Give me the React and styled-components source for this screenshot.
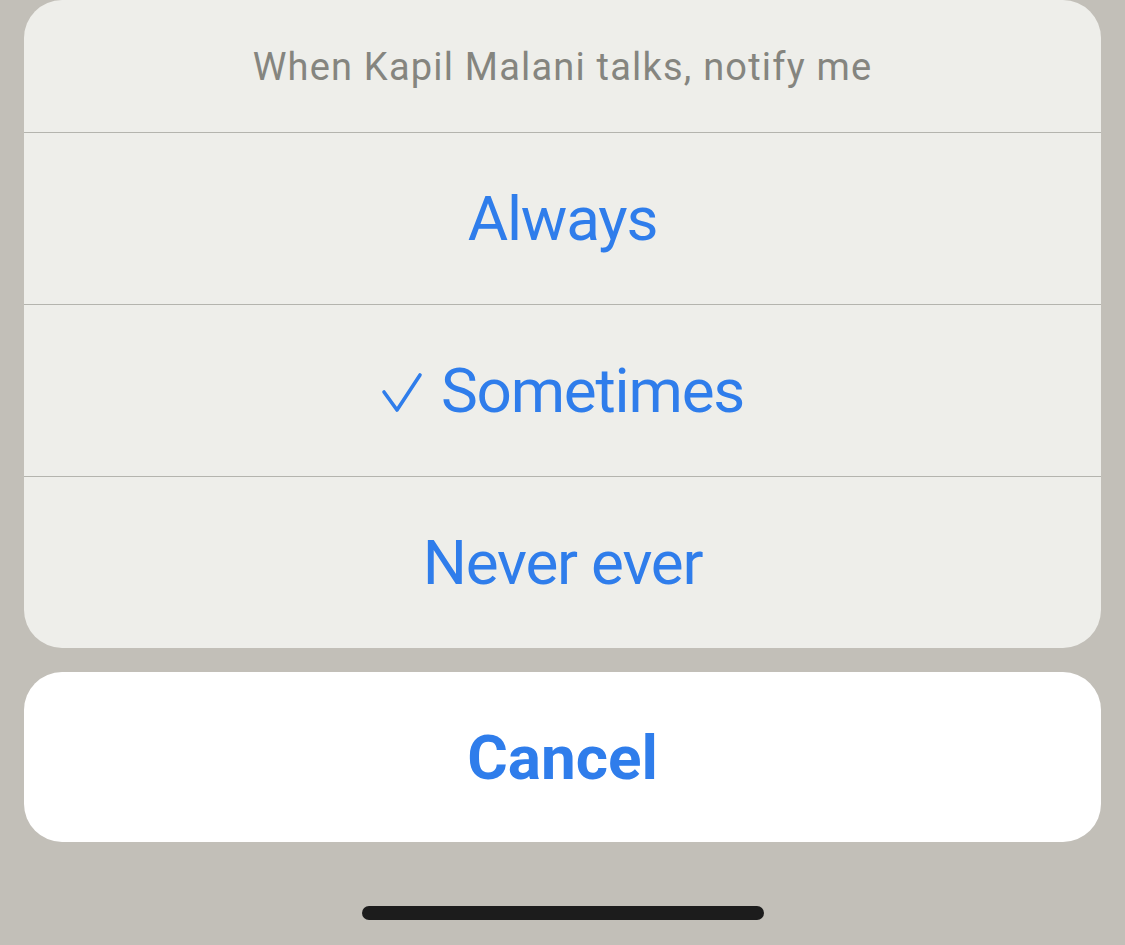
import React, { useState } from "react";
import styled, { createGlobalStyle } from "styled-components";

const Global = createGlobalStyle`
  html, body {
    margin: 0;
    padding: 0;
    background: #c2bfb8;
  }
  body {
    font-family: Roboto, "Noto Sans", sans-serif;
  }
`;

const Screen = styled.div`
  width: 1125px;
  height: 945px;
  box-sizing: border-box;
  padding: 0 24px;
  display: flex;
  flex-direction: column;
  background: #c2bfb8;
  overflow: hidden;
`;

const Sheet = styled.div`
  background: #eeeeea;
  border-radius: 38px;
  overflow: hidden;
  display: flex;
  flex-direction: column;
`;

const Title = styled.div`
  height: 132px;
  display: flex;
  align-items: center;
  justify-content: center;
  color: #85857f;
  font-size: 38px;
  letter-spacing: 1.2px;
  box-sizing: border-box;
  padding-top: 2px;
`;

const Option = styled.button`
  height: 172px;
  border: none;
  border-top: 1px solid #b4b4ae;
  background: transparent;
  display: flex;
  align-items: center;
  justify-content: center;
  gap: 18px;
  color: #2f7deb;
  font-family: Roboto, "Noto Sans", sans-serif;
  font-size: 62px;
  letter-spacing: -1.2px;
  padding: 0;
  cursor: pointer;
`;

const Check = styled.svg`
  width: 42px;
  height: 42px;
  margin-top: 4px;
`;

const CancelButton = styled.button`
  margin-top: 24px;
  height: 170px;
  border: none;
  border-radius: 38px;
  background: #ffffff;
  color: #2f7deb;
  font-family: Roboto, "Noto Sans", sans-serif;
  font-weight: 700;
  font-size: 62px;
  cursor: pointer;
`;

const HomeBar = styled.div`
  width: 402px;
  height: 14px;
  border-radius: 7px;
  background: #1c1c1c;
  margin: 64px auto 0;
`;

const options = ["Always", "Sometimes", "Never ever"];

export default function App() {
  const [selected, setSelected] = useState("Sometimes");

  return (
    <>
      <Global />
      <Screen>
        <Sheet>
          <Title>When Kapil Malani talks, notify me</Title>
          {options.map((o) => (
            <Option key={o} onClick={() => setSelected(o)}>
              {selected === o && (
                <Check viewBox="0 0 42 42">
                  <path
                    d="M3 20 L16 38 L39 3"
                    fill="none"
                    stroke="#2f7deb"
                    strokeWidth="3.6"
                    strokeLinecap="round"
                    strokeLinejoin="round"
                  />
                </Check>
              )}
              {o}
            </Option>
          ))}
        </Sheet>
        <CancelButton>Cancel</CancelButton>
        <HomeBar />
      </Screen>
    </>
  );
}
